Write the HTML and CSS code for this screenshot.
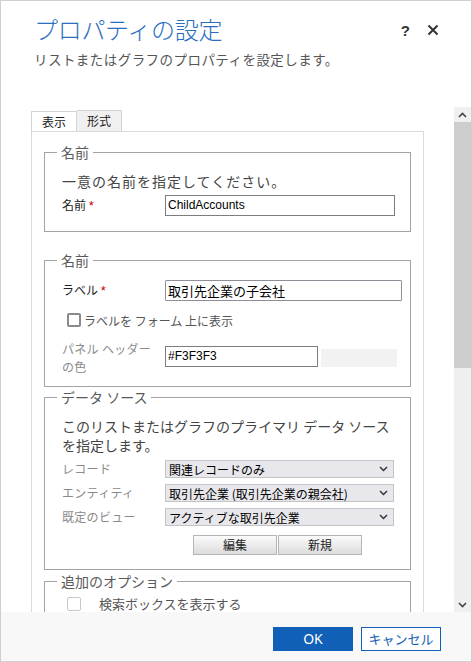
FILE: index.html
```html
<!DOCTYPE html>
<html lang="ja">
<head>
<meta charset="utf-8">
<title>プロパティの設定</title>
<link rel="stylesheet" href="styles.css">
</head>
<body>
<div class="dialog">
  <header class="header">
    <div class="title-row">
      <h1 class="title">プロパティの設定</h1>
      <div class="title-actions">
        <span class="help">?</span>
        <svg class="close" width="12" height="12" viewBox="0 0 12 12"><path d="M1.5 1.5 L10.5 10.5 M10.5 1.5 L1.5 10.5" stroke="#333" stroke-width="2" fill="none"/></svg>
      </div>
    </div>
    <p class="subtitle">リストまたはグラフのプロパティを設定します。</p>
  </header>

  <div class="body">
    <div class="scroll">
      <div class="tabs">
        <div class="tab active">表示</div>
        <div class="tab">形式</div>
      </div>
      <div class="panel">
        <fieldset class="group g1">
          <legend>名前</legend>
          <p class="desc spaced">一意の名前を指定してください。</p>
          <div class="row">
            <label class="lbl">名前 <span class="req">*</span></label>
            <div class="input name-input">ChildAccounts</div>
          </div>
        </fieldset>

        <fieldset class="group g2">
          <legend>名前</legend>
          <div class="row r-label">
            <label class="lbl">ラベル <span class="req">*</span></label>
            <div class="input label-input">取引先企業の子会社</div>
          </div>
          <div class="row r-check">
            <span class="check"></span>
            <span class="check-text">ラベルを フォーム 上に表示</span>
          </div>
          <div class="row r-color">
            <label class="lbl muted two">パネル ヘッダー<br>の色</label>
            <div class="input color-input">#F3F3F3</div>
            <div class="swatch"></div>
          </div>
        </fieldset>

        <fieldset class="group g3">
          <legend>データ ソース</legend>
          <p class="desc two-line">このリストまたはグラフのプライマリ データ ソース<br>を指定します。</p>
          <div class="row r-select first">
            <label class="lbl muted">レコード</label>
            <div class="select"><span>関連レコードのみ</span><svg width="9" height="6" viewBox="0 0 9 6"><path d="M1 1 L4.5 4.5 L8 1" stroke="#333" stroke-width="1.5" fill="none"/></svg></div>
          </div>
          <div class="row r-select">
            <label class="lbl muted">エンティティ</label>
            <div class="select"><span>取引先企業 (取引先企業の親会社)</span><svg width="9" height="6" viewBox="0 0 9 6"><path d="M1 1 L4.5 4.5 L8 1" stroke="#333" stroke-width="1.5" fill="none"/></svg></div>
          </div>
          <div class="row r-select">
            <label class="lbl muted">既定のビュー</label>
            <div class="select"><span>アクティブな取引先企業</span><svg width="9" height="6" viewBox="0 0 9 6"><path d="M1 1 L4.5 4.5 L8 1" stroke="#333" stroke-width="1.5" fill="none"/></svg></div>
          </div>
          <div class="btn-row">
            <button class="gbtn">編集</button>
            <button class="gbtn">新規</button>
          </div>
        </fieldset>

        <fieldset class="group g4">
          <legend>追加のオプション</legend>
          <div class="row r-check2">
            <span class="check light"></span>
            <span class="check-text2">検索ボックスを表示する</span>
          </div>
        </fieldset>
      </div>
    </div>
    <div class="scrollbar">
      <div class="arrow"><svg width="9" height="6" viewBox="0 0 9 6"><path d="M1 5 L4.5 1.5 L8 5" stroke="#444" stroke-width="1.6" fill="none"/></svg></div>
      <div class="thumb"></div>
      <div class="track"></div>
      <div class="arrow"><svg width="9" height="6" viewBox="0 0 9 6"><path d="M1 1 L4.5 4.5 L8 1" stroke="#444" stroke-width="1.6" fill="none"/></svg></div>
    </div>
  </div>

  <footer class="footer">
    <button class="btn primary">OK</button>
    <button class="btn secondary">キャンセル</button>
  </footer>
</div>
</body>
</html>
```

FILE: styles.css
```css
* { box-sizing: border-box; }
html, body { margin: 0; padding: 0; background: #fff; }
body {
  font-family: "Noto Sans CJK JP", "Noto Sans", sans-serif;
  color: #333;
}
.dialog {
  width: 472px;
  height: 662px;
  border: 1px solid #cfcfcf;
  display: flex;
  flex-direction: column;
  overflow: hidden;
  background: #fff;
}
.header {
  height: 106px;
  flex: none;
  padding: 12px 0 0 33px;
}
.title-row {
  display: flex;
  align-items: center;
  justify-content: space-between;
  height: 32px;
}
.title {
  margin: 0;
  font-size: 24px;
  font-weight: 300;
  line-height: 32px;
  color: #2a6ebf;
  letter-spacing: -0.3px;
}
.title-actions {
  display: flex;
  align-items: center;
  gap: 17px;
  padding-right: 32px;
  padding-top: 2px;
}
.help {
  font-family: "Liberation Sans", sans-serif;
  font-weight: bold;
  font-size: 15px;
  color: #333;
}
.close { display: block; }
.subtitle {
  margin: 4px 0 0 0;
  font-size: 13.5px;
  line-height: 20px;
  color: #555;
  letter-spacing: 0.45px;
}
.body {
  flex: 1;
  display: flex;
  min-height: 0;
}
.scroll {
  flex: 1;
  overflow: hidden;
  padding: 3px 0 0 30px;
}
.tabs {
  display: flex;
  height: 21px;
}
.tab {
  width: 46px;
  height: 21px;
  border: 1px solid #d4d4d4;
  border-bottom: none;
  font-size: 12px;
  line-height: 20px;
  text-align: center;
  color: #222;
  background: #f0f0f0;
}
.tab.active { background: #fff; position: relative; top: 1px; height: 20px; z-index: 1; }
.tab + .tab { border-left: none; width: 45px; }
.panel {
  width: 393px;
  height: 600px;
  border: 1px solid #dadada;
  padding: 10px 12px 0 12px;
  background: #fff;
}
.group {
  margin: 0;
  padding: 0 6px 0 17px;
  border: 1px solid #a3a3a3;
  min-width: 0;
}
.group legend {
  margin-left: -5px;
  padding: 0 4px;
  font-size: 14px;
  line-height: 20px;
  color: #5a5a5a;
}
.g1 { padding-bottom: 15px; }
.g2 { margin-top: 18px; padding-bottom: 10px; }
.g3 { margin-top: 0; padding-bottom: 14px; }
.g4 { margin-top: 1px; padding-bottom: 20px; }
.desc {
  margin: 9px 0 0 0;
  font-size: 14px;
  line-height: 20px;
  color: #444;
}
.desc.spaced { letter-spacing: 1px; }
.desc.two-line { margin-top: 10px; line-height: 19px; }
.row {
  display: flex;
  align-items: center;
}
.g1 .row { margin-top: 4px; }
.lbl {
  width: 103px;
  flex: none;
  font-size: 12px;
  line-height: 18px;
  color: #222;
}
.lbl.muted { color: #8a8a8a; letter-spacing: 0.3px; }
.req { color: #c00; font-family: "Liberation Sans", sans-serif; font-size: 13px; }
.input {
  flex: none;
  height: 21px;
  border: 1px solid #7d7d7d;
  background: #fff;
  padding: 0 2px;
  font-size: 12px;
  line-height: 19px;
  color: #000;
}
.name-input {
  width: 230px;
  font-family: "Liberation Sans", sans-serif;
}
.r-label { margin-top: 10px; }
.label-input {
  width: 237px;
  border-color: #8e8e98;
  border-radius: 1px;
  font-size: 13px;
}
.r-check { margin-top: 9px; height: 20px; padding-left: 5px; }
.check {
  width: 14px;
  height: 14px;
  border: 2px solid #8a8a8a;
  border-radius: 2px;
  flex: none;
}
.check.light { border-color: #c8c8c8; border-width: 1px; }
.check-text {
  margin-left: 3px;
  font-size: 12px;
  color: #555;
}
.r-color { margin-top: 10px; align-items: flex-start; }
.lbl.two { line-height: 18px; }
.color-input {
  margin-top: 6px;
  width: 153px;
  height: 21px;
  font-family: "Liberation Sans", sans-serif;
  font-size: 12px;
}
.swatch {
  flex: none;
  margin-top: 9px;
  margin-left: 3px;
  width: 76px;
  height: 18px;
  background: #f2f2f2;
}
.r-select { margin-top: 6px; }
.r-select.first { margin-top: 5px; }
.select {
  flex: none;
  width: 229px;
  height: 18px;
  border: 1px solid #c4c4c4;
  background: #e8e8ec;
  display: flex;
  align-items: center;
  justify-content: space-between;
  padding: 0 5px 0 3px;
  font-size: 12px;
  color: #000;
}
.select svg { display: block; }
.btn-row {
  margin: 9px 0 0 131px;
  display: flex;
  gap: 1px;
}
.gbtn {
  width: 84px;
  height: 20px;
  margin: 0;
  padding: 0;
  border: 1px solid #b5b5b5;
  background: linear-gradient(#fbfbfb, #dcdcdc);
  font-family: "Noto Sans CJK JP", sans-serif;
  font-size: 12px;
  line-height: 18px;
  color: #222;
}
.r-check2 { margin-top: 3px; padding-left: 5px; }
.check-text2 {
  margin-left: 18px;
  font-size: 13px;
  color: #555;
}
.scrollbar {
  width: 17px;
  flex: none;
  display: flex;
  flex-direction: column;
  background: #efefef;
}
.arrow {
  height: 15px;
  display: flex;
  align-items: center;
  justify-content: center;
  background: #f0f0f0;
}
.thumb {
  height: 246px;
  background: #cdcdcd;
}
.track { flex: 1; background: #efefef; }
.footer {
  height: 49px;
  flex: none;
  background: #f8f8f8;
  display: flex;
  justify-content: flex-end;
  align-items: flex-start;
  gap: 8px;
  padding: 15px 30px 0 0;
}
.btn {
  width: 80px;
  height: 24px;
  margin: 0;
  padding: 0;
  font-family: "Noto Sans CJK JP", "Noto Sans", sans-serif;
  font-size: 13px;
  line-height: 20px;
}
.btn.primary {
  background: #1160b7;
  border: 1px solid #1160b7;
  color: #fff;
  font-family: "Noto Sans", sans-serif;
  font-size: 14px;
}
.btn.secondary {
  background: #fff;
  border: 1px solid #1160b7;
  color: #1160b7;
}
```
